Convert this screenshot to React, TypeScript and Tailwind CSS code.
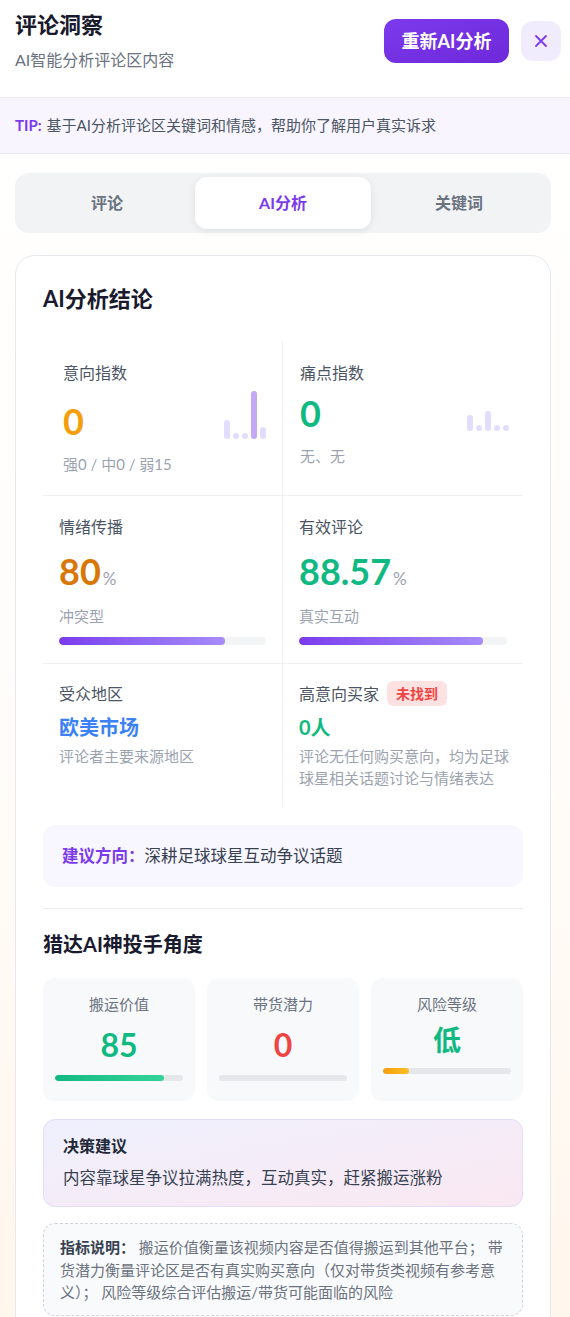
import React from 'react';

const FONT = { fontFamily: 'Lato, "Noto Sans CJK SC", sans-serif' };

// tiny bar sparkline next to the index values
const MiniBars = ({ bars }: { bars: { h: number; strong?: boolean }[] }) => (
  <div className="flex items-end gap-[3px] mb-[4px]">
    {bars.map((b, i) => (
      <div
        key={i}
        className={`w-[6px] rounded-full ${b.strong ? 'bg-[#c4a8f6]' : 'bg-[#e2dcfd]'}`}
        style={{ height: b.h }}
      />
    ))}
  </div>
);

const Progress = ({ value }: { value: number }) => (
  <div className="h-[8px] rounded-full bg-[#f3f4f6] overflow-hidden">
    <div
      className="h-full rounded-full bg-gradient-to-r from-[#7c3aed] to-[#a78bfa]"
      style={{ width: `${value}%` }}
    />
  </div>
);

const tabs = ['评论', 'AI分析', '关键词'];

const App = () => {
  return (
    <div
      className="min-h-screen bg-gradient-to-b from-white via-[#fffdfb] to-[#fff6ec] text-[#1f2937]"
      style={FONT}
    >
      {/* header */}
      <div className="flex justify-between items-start pl-[15px] pr-[9px] pb-[26px] pt-[10px]">
        <div>
          <h1 className="text-[22px] leading-[30px] font-bold text-[#1a1a2e]">评论洞察</h1>
          <p className="mt-[9px] text-[16px] leading-[22px] text-[#6b7280]">AI智能分析评论区内容</p>
        </div>
        <div className="flex items-center gap-3 mt-[9px]">
          <button className="h-[44px] w-[125px] rounded-xl bg-gradient-to-br from-[#7c3aed] to-[#6d28d9] text-white text-[18px] font-bold">
            重新AI分析
          </button>
          <button className="w-10 h-10 rounded-xl bg-[#f0ebfd] flex items-center justify-center text-[#7c3aed]">
            <svg width="14" height="14" viewBox="0 0 14 14" fill="none" stroke="currentColor" strokeWidth="1.8" strokeLinecap="round">
              <path d="M2 2l10 10M12 2L2 12" />
            </svg>
          </button>
        </div>
      </div>

      {/* tip */}
      <div className="h-[57px] flex items-center px-[15px] bg-[#f8f5fe] border-y border-[#ebe8f0] text-[15px]">
        <span className="font-bold text-[#7c3aed] mr-[5px]">TIP:</span>
        <span className="text-[#4b5563]">基于AI分析评论区关键词和情感，帮助你了解用户真实诉求</span>
      </div>

      {/* tabs */}
      <div className="ml-[15px] w-[536px] mt-[19px] h-[60px] p-1 rounded-[14px] bg-[#f1f3f5] flex">
        {tabs.map((t) => (
          <div
            key={t}
            className={`flex-1 flex items-center justify-center rounded-xl text-[16px] font-bold ${
              t === 'AI分析' ? 'bg-white text-[#7c3aed] shadow-[0_2px_8px_rgba(0,0,0,0.08)]' : 'text-[#6b7280]'
            }`}
          >
            {t}
          </div>
        ))}
      </div>

      {/* analysis card */}
      <div className="ml-[15px] w-[536px] mt-[22px] rounded-[20px] border border-[#e6e8ee] bg-white px-[27px] pt-[28px] pb-[28px]">
        <h2 className="text-[22px] leading-[30px] font-bold text-[#1a1a2e]">AI分析结论</h2>

        <div className="mt-[27px] grid grid-cols-2">
          {/* intent index */}
          <div className="border-r border-b border-[#eef0f3] pl-5 pr-4 pt-5 pb-5">
            <div className="text-[16px] leading-6 text-[#4b5563]">意向指数</div>
            <div className="mt-[6px] flex items-end justify-between">
              <span className="text-[36px] leading-[44px] font-bold text-[#f59e0b]">0</span>
              <MiniBars bars={[{ h: 19 }, { h: 6 }, { h: 6 }, { h: 48, strong: true }, { h: 12 }]} />
            </div>
            <div className="mt-[10px] text-[15px] leading-[22px] text-[#9ca3af]">强0 / 中0 / 弱15</div>
          </div>

          {/* pain point index */}
          <div className="border-b border-[#eef0f3] pl-[17px] pr-[14px] pt-5 pb-5">
            <div className="text-[16px] leading-6 text-[#4b5563]">痛点指数</div>
            <div className="mt-[6px] flex items-end justify-between">
              <span className="text-[36px] leading-[44px] font-bold text-[#10b981]">0</span>
              <MiniBars bars={[{ h: 16 }, { h: 6 }, { h: 20 }, { h: 6 }, { h: 6 }]} />
            </div>
            <div className="mt-[10px] text-[15px] leading-[22px] text-[#9ca3af]">无、无</div>
          </div>

          {/* emotion spread */}
          <div className="border-r border-b border-[#eef0f3] px-4 pt-[19px] pb-[18px]">
            <div className="text-[16px] leading-6 text-[#4b5563]">情绪传播</div>
            <div className="mt-[10px] flex items-baseline">
              <span className="text-[36px] leading-[44px] font-bold text-[#d97706]">80</span>
              <span className="ml-[2px] text-[17px] text-[#9ca3af]">%</span>
            </div>
            <div className="mt-[12px] text-[15px] leading-[22px] text-[#9ca3af]">冲突型</div>
            <div className="mt-[10px]">
              <Progress value={80} />
            </div>
          </div>

          {/* valid comments */}
          <div className="border-b border-[#eef0f3] px-4 pt-[19px] pb-[18px]">
            <div className="text-[16px] leading-6 text-[#4b5563]">有效评论</div>
            <div className="mt-[10px] flex items-baseline">
              <span className="text-[36px] leading-[44px] font-bold text-[#10b981]">88.57</span>
              <span className="ml-[2px] text-[17px] text-[#9ca3af]">%</span>
            </div>
            <div className="mt-[12px] text-[15px] leading-[22px] text-[#9ca3af]">真实互动</div>
            <div className="mt-[10px]">
              <Progress value={88.57} />
            </div>
          </div>

          {/* audience region */}
          <div className="border-r border-[#eef0f3] px-4 pt-[17px] pb-[18px]">
            <div className="h-[25px] flex items-center text-[16px] text-[#4b5563]">受众地区</div>
            <div className="mt-[7px] text-[20px] leading-[28px] font-bold text-[#3b82f6]">欧美市场</div>
            <div className="mt-[4px] text-[15px] leading-[22px] text-[#9ca3af]">评论者主要来源地区</div>
          </div>

          {/* high intent buyers */}
          <div className="pl-4 pr-[10px] pt-[17px] pb-[18px]">
            <div className="h-[25px] flex items-center text-[16px] text-[#4b5563]">
              高意向买家
              <span className="ml-2 h-[25px] px-[9px] rounded-md bg-[#fee2e2] text-[#ef4444] text-[14px] font-bold flex items-center">
                未找到
              </span>
            </div>
            <div className="mt-[7px] text-[20px] leading-[28px] font-bold text-[#10b981]">0人</div>
            <div className="mt-[4px] text-[15px] leading-[22px] text-[#9ca3af]">
              评论无任何购买意向，均为足球球星相关话题讨论与情绪表达
            </div>
          </div>
        </div>

        <div className="mt-[18px] rounded-xl bg-[#f8f6fe] px-[19px] py-[19px] text-[16.5px] leading-6">
          <span className="font-bold text-[#7c3aed]">建议方向：</span>
          <span className="text-[#374151]">深耕足球球星互动争议话题</span>
        </div>

        <div className="mt-[21px] border-t border-[#eceef2]" />

        <h3 className="mt-[21px] text-[20px] leading-[28px] font-bold text-[#1a1a2e]">猎达AI神投手角度</h3>

        <div className="mt-[20px] grid grid-cols-3 gap-3">
          <div className="rounded-xl bg-[#f8f9fb] px-3 pt-[15px] pb-[20px] text-center">
            <div className="text-[15px] leading-[22px] text-[#6b7280]">搬运价值</div>
            <div className="mt-[10px] text-[32px] leading-[40px] font-bold text-[#10b981]">85</div>
            <div className="mt-[10px] h-[6px] rounded-full bg-[#e5e7eb] overflow-hidden">
              <div className="h-full w-[85%] rounded-full bg-gradient-to-r from-[#10b981] to-[#34d399]" />
            </div>
          </div>
          <div className="rounded-xl bg-[#f8f9fb] px-3 pt-[15px] pb-[20px] text-center">
            <div className="text-[15px] leading-[22px] text-[#6b7280]">带货潜力</div>
            <div className="mt-[10px] text-[32px] leading-[40px] font-bold text-[#ef4444]">0</div>
            <div className="mt-[10px] h-[6px] rounded-full bg-[#e5e7eb]" />
          </div>
          <div className="rounded-xl bg-[#f8f9fb] px-3 pt-[15px] pb-[20px] text-center">
            <div className="text-[15px] leading-[22px] text-[#6b7280]">风险等级</div>
            <div className="mt-[10px] text-[28px] leading-[31px] font-bold text-[#10b981]">低</div>
            <div className="mt-[12px] h-[6px] rounded-full bg-[#e5e7eb] overflow-hidden">
              <div className="h-full w-[20%] rounded-full bg-gradient-to-r from-[#f59e0b] to-[#fbbf24]" />
            </div>
          </div>
        </div>

        <div className="mt-[18px] rounded-xl border border-[#e3dcfa] bg-gradient-to-br from-[#eef0fd] to-[#fae8f2] px-[19px] pt-[14px] pb-[16px]">
          <div className="text-[16px] leading-6 font-bold text-[#1f2937]">决策建议</div>
          <div className="mt-[8px] text-[16.5px] leading-6 text-[#374151]">内容靠球星争议拉满热度，互动真实，赶紧搬运涨粉</div>
        </div>

        <div className="mt-[16px] rounded-xl border border-dashed border-[#d1d5db] bg-[#f9fafb] px-4 pt-[12px] pb-[11px] text-[15px] leading-[22.5px] text-[#6b7280]">
          <p>
            <b className="font-bold text-[#374151]">指标说明：</b> 搬运价值衡量该视频内容是否值得搬运到其他平台； 带货潜力衡量评论区是否有真实购买意向（仅对带货类视频有参考意义）； 风险等级综合评估搬运/带货可能面临的风险
          </p>
        </div>
      </div>
    </div>
  );
};

export default App;
